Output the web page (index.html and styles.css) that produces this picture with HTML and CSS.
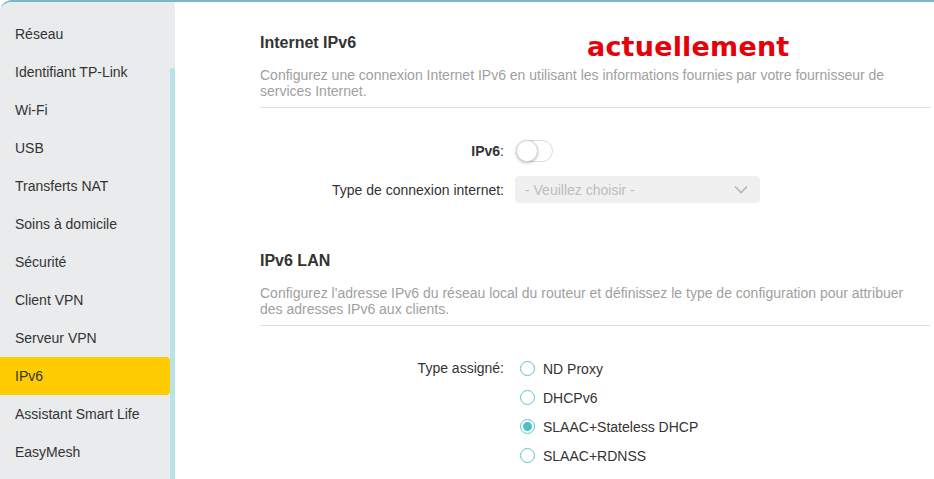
FILE: index.html
```html
<!DOCTYPE html>
<html lang="fr">
<head>
  <meta charset="UTF-8">
  <meta name="viewport" content="width=device-width, initial-scale=1.0">
  <title>IPv6</title>
  <link rel="stylesheet" href="styles.css">
</head>
<body>
  <div class="page">
    <div class="sidebar">
      <ul class="menu">
        <li>Réseau</li>
        <li>Identifiant TP-Link</li>
        <li>Wi-Fi</li>
        <li>USB</li>
        <li>Transferts NAT</li>
        <li>Soins à domicile</li>
        <li>Sécurité</li>
        <li>Client VPN</li>
        <li>Serveur VPN</li>
        <li class="active">IPv6</li>
        <li>Assistant Smart Life</li>
        <li>EasyMesh</li>
      </ul>
      <div class="scroll-track"><div class="scroll-thumb"></div></div>
    </div>

    <div class="content">
      <div class="section">
        <h2 class="section-title">Internet IPv6</h2>
        <span class="note">actuellement</span>
        <p class="section-desc">Configurez une connexion Internet IPv6 en utilisant les informations fournies par votre fournisseur de services Internet.</p>
      </div>

      <div class="form-grid first">
        <div class="form-label"><b>IPv6</b>:</div>
        <div class="form-control">
          <span class="toggle"><span class="knob"></span></span>
        </div>

        <div class="form-label">Type de connexion internet:</div>
        <div class="form-control">
          <div class="select">
            <span>- Veuillez choisir -</span>
            <svg width="14" height="9" viewBox="0 0 14 9"><path d="M1 1.5 L7 7.5 L13 1.5" fill="none" stroke="#b5b5b5" stroke-width="1.6"/></svg>
          </div>
        </div>
      </div>

      <div class="section second">
        <h2 class="section-title">IPv6 LAN</h2>
        <p class="section-desc">Configurez l'adresse IPv6 du réseau local du routeur et définissez le type de configuration pour attribuer des adresses IPv6 aux clients.</p>
      </div>

      <div class="form-grid radios">
        <div class="form-label">Type assigné:</div>
        <div class="radio-group">
          <label class="radio"><span class="circle"></span>ND Proxy</label>
          <label class="radio"><span class="circle"></span>DHCPv6</label>
          <label class="radio"><span class="circle checked"></span>SLAAC+Stateless DHCP</label>
          <label class="radio"><span class="circle"></span>SLAAC+RDNSS</label>
        </div>
      </div>
    </div>
  </div>
</body>
</html>
```

FILE: styles.css
```css
body {
  margin: 0;
  padding: 0;
  font-family: "Liberation Sans", Arial, sans-serif;
  color: #333;
  background-color: #fff;
}

.page {
  position: relative;
  display: flex;
  height: 477px;
  overflow: hidden;
  border-top: 2px solid #78b9c3;
  border-top-left-radius: 12px;
}

/* small notch in the top line */
.page::after {
  content: "";
  position: absolute;
  top: -2px;
  left: 778px;
  width: 20px;
  height: 2px;
  background-color: #fff;
}

.sidebar {
  display: flex;
  width: 175px;
  flex-shrink: 0;
  background-color: #e9ebed;
}

.menu {
  list-style: none;
  margin: 13px 0 0;
  padding: 0;
  width: 170px;
}

.menu li {
  height: 38px;
  line-height: 38px;
  padding-left: 15px;
  font-size: 14px;
  color: #333;
  white-space: nowrap;
}

.menu li.active {
  background-color: #fecc00;
  border-radius: 0 4px 4px 0;
}

.scroll-track {
  width: 5px;
}

.scroll-thumb {
  margin-top: 66px;
  height: 420px;
  background-color: #b9e2e6;
  border-radius: 3px 3px 0 0;
}

.content {
  flex: 1;
  padding: 31px 4px 0 85px;
}

.section {
  position: relative;
  border-bottom: 1px solid #dedede;
  padding-bottom: 8px;
}

.section-title {
  margin: 0;
  font-size: 16px;
  line-height: 20px;
  font-weight: bold;
  color: #333;
}

.note {
  position: absolute;
  left: 327px;
  top: -2px;
  font-family: "DejaVu Sans", Verdana, sans-serif;
  font-weight: bold;
  font-size: 27px;
  letter-spacing: 0.2px;
  color: #e60008;
}

.section-desc {
  margin: 14px 0 0;
  padding-right: 24px;
  font-size: 14px;
  line-height: 16px;
  color: #a0a0a0;
}

.section.second {
  margin-top: 48px;
}

.form-grid {
  display: grid;
  grid-template-columns: 244px 1fr;
  column-gap: 11px;
  row-gap: 14px;
  align-items: center;
  font-size: 14px;
}

.form-grid.first {
  margin-top: 32px;
}

.form-label {
  text-align: right;
  color: #333;
}

.toggle {
  position: relative;
  display: block;
  width: 35px;
  height: 20px;
  margin-left: 1px;
  border: 1px solid #dcdcdc;
  border-radius: 11px;
  background-color: #fff;
}

.knob {
  position: absolute;
  left: -1px;
  top: -1px;
  width: 20px;
  height: 20px;
  border-radius: 50%;
  background-color: #fff;
  border: 1px solid #d5d5d5;
  box-shadow: 0 1px 3px rgba(0, 0, 0, 0.25);
}

.select {
  display: flex;
  align-items: center;
  justify-content: space-between;
  width: 245px;
  height: 27px;
  box-sizing: border-box;
  padding: 0 12px 0 10px;
  background-color: #f0f0f0;
  border-radius: 4px;
  color: #bdbdbd;
}

.form-grid.radios {
  margin-top: 28px;
  align-items: start;
}

.radios .form-label {
  line-height: 29px;
}

.radio-group {
  padding-left: 5px;
}

.radio {
  display: flex;
  align-items: center;
  height: 29px;
  color: #333;
}

.circle {
  width: 13px;
  height: 13px;
  margin-right: 8px;
  border: 1px solid #5ec6cf;
  border-radius: 50%;
  box-sizing: content-box;
  position: relative;
}

.circle.checked::after {
  content: "";
  position: absolute;
  left: 2px;
  top: 2px;
  width: 9px;
  height: 9px;
  border-radius: 50%;
  background-color: #4dbfc9;
}
```
